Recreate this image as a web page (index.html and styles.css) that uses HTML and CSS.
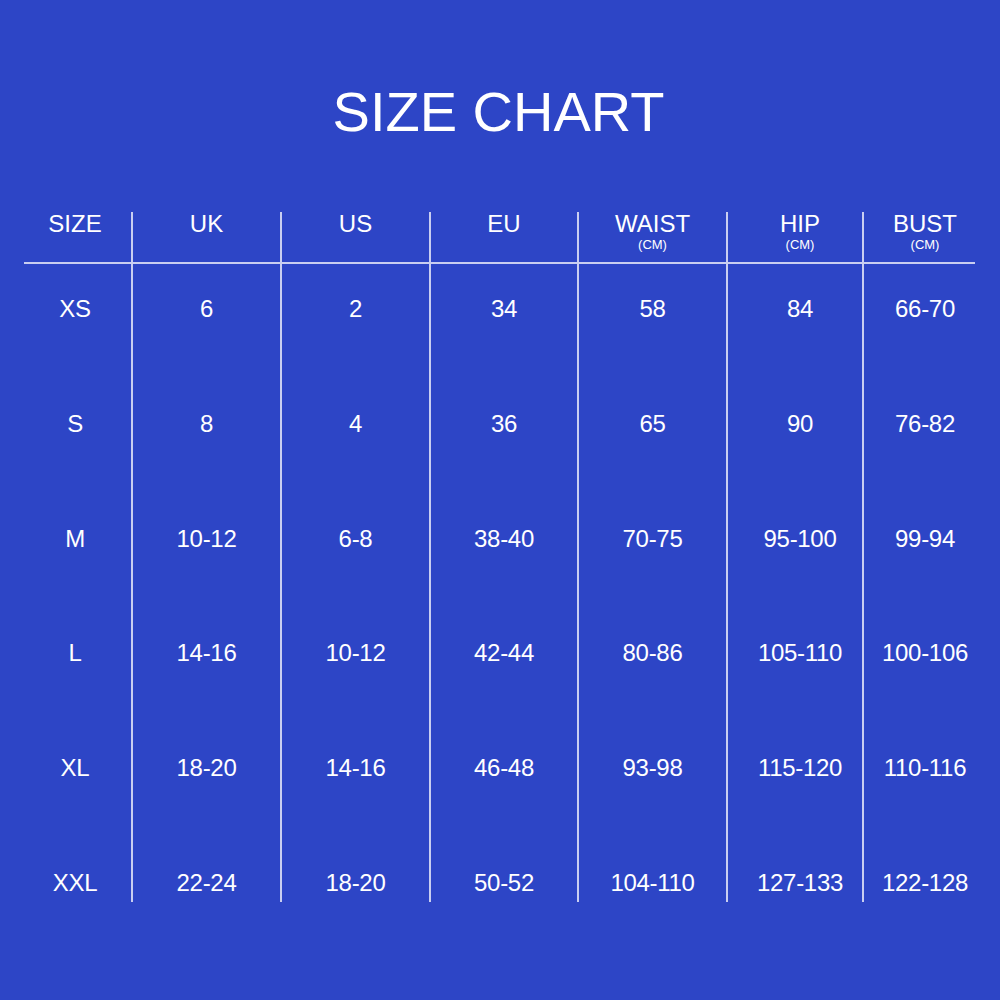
FILE: index.html
```html
<!DOCTYPE html>
<html>
<head>
<meta charset="utf-8">
<link rel="stylesheet" href="styles.css">
</head>
<body>
<main class="page">
  <h1 class="title">SIZE CHART</h1>
  <div class="chart">
    <div class="cell head c1">SIZE</div>
    <div class="cell head c2">UK</div>
    <div class="cell head c3">US</div>
    <div class="cell head c4">EU</div>
    <div class="cell head c5">WAIST<span class="unit">(CM)</span></div>
    <div class="cell head c6">HIP<span class="unit">(CM)</span></div>
    <div class="cell head c7">BUST<span class="unit">(CM)</span></div>

    <div class="cell c1">XS</div><div class="cell c2">6</div><div class="cell c3">2</div><div class="cell c4">34</div><div class="cell c5">58</div><div class="cell c6">84</div><div class="cell c7">66-70</div>
    <div class="cell c1">S</div><div class="cell c2">8</div><div class="cell c3">4</div><div class="cell c4">36</div><div class="cell c5">65</div><div class="cell c6">90</div><div class="cell c7">76-82</div>
    <div class="cell c1">M</div><div class="cell c2">10-12</div><div class="cell c3">6-8</div><div class="cell c4">38-40</div><div class="cell c5">70-75</div><div class="cell c6">95-100</div><div class="cell c7">99-94</div>
    <div class="cell c1">L</div><div class="cell c2">14-16</div><div class="cell c3">10-12</div><div class="cell c4">42-44</div><div class="cell c5">80-86</div><div class="cell c6">105-110</div><div class="cell c7">100-106</div>
    <div class="cell c1">XL</div><div class="cell c2">18-20</div><div class="cell c3">14-16</div><div class="cell c4">46-48</div><div class="cell c5">93-98</div><div class="cell c6">115-120</div><div class="cell c7">110-116</div>
    <div class="cell c1">XXL</div><div class="cell c2">22-24</div><div class="cell c3">18-20</div><div class="cell c4">50-52</div><div class="cell c5">104-110</div><div class="cell c6">127-133</div><div class="cell c7">122-128</div>
  </div>
</main>
</body>
</html>
```
FILE: styles.css
```css
html, body {
  margin: 0;
  padding: 0;
}
body {
  background: #2d45c6;
  color: #ffffff;
  font-family: "Liberation Sans", Arial, sans-serif;
  width: 1000px;
  height: 1000px;
  overflow: hidden;
}
.page {
  padding: 80px 25px 0 24px;
}
.title {
  margin: 0 0 68px 0;
  font-size: 56px;
  line-height: 64px;
  font-weight: 400;
  text-align: center;
  padding-right: 2px;
}
.chart {
  display: grid;
  grid-template-columns: 107px 149px 149px 148px 149px 136px 113px;
  grid-template-rows: 52px repeat(5, 114.8px) 64px;
  width: 951px;
}
.cell {
  font-size: 24px;
  line-height: 28px;
  text-align: center;
  padding-top: 31px;
  box-sizing: border-box;
  border-left: 2px solid #c9cef1;
  letter-spacing: -0.3px;
}
.cell.head {
  padding-top: 2px;
  line-height: 20px;
  letter-spacing: 0;
  border-bottom: 2px solid #c9cef1;
  display: flex;
  flex-direction: column;
  align-items: center;
}
.cell.c1 {
  border-left: none;
  padding-right: 5px;
}
.cell.c6 {
  padding-left: 10px;
}
.cell.c7 {
  padding-left: 11px;
}
.unit {
  display: block;
  font-size: 13px;
  line-height: 14px;
  margin-top: 4px;
}
```
